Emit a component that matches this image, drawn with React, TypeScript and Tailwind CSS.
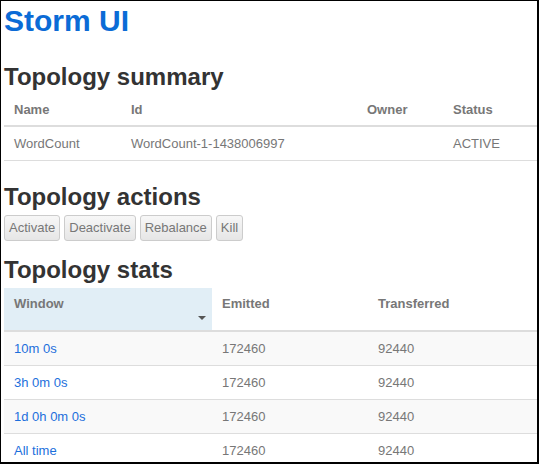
import React from 'react';

const summaryCols = ['w-[117px]', 'w-[236px]', 'w-[86px]', ''];

const stats = [
    { window: '10m 0s', emitted: '172460', transferred: '92440' },
    { window: '3h 0m 0s', emitted: '172460', transferred: '92440' },
    { window: '1d 0h 0m 0s', emitted: '172460', transferred: '92440' },
    { window: 'All time', emitted: '172460', transferred: '92440' },
];

const Heading = ({ children, className }: { children: React.ReactNode; className: string }) => (
    <h2 className={`text-[24px] leading-[26px] font-bold text-[#333] ${className}`}>{children}</h2>
);

const App = () => {
    return (
        <div className="w-[539px] h-[464px] overflow-hidden bg-white border-t border-l border-r-2 border-b-2 border-black pl-[3px] font-['Liberation_Sans',Arial,sans-serif]">
            <h1 className="mt-[3px] text-[30px] leading-[34px] font-bold text-[#0b6bd6]">Storm UI</h1>

            {/* Topology summary */}
            <Heading className="mt-[26px]">Topology summary</Heading>
            <table className="mt-[4px] w-[533px] text-[13px] text-[#777] border-collapse">
                <thead>
                    <tr className="border-b-2 border-[#ddd]">
                        {['Name', 'Id', 'Owner', 'Status'].map((h, i) => (
                            <th key={h} className={`${summaryCols[i]} text-left font-bold pl-[10px] pt-[6px] pb-[5px] leading-[20px]`}>{h}</th>
                        ))}
                    </tr>
                </thead>
                <tbody>
                    <tr className="border-b border-[#ddd]">
                        <td className="pl-[10px] py-[6px] leading-[21px]">WordCount</td>
                        <td className="pl-[10px] py-[6px] leading-[21px]">WordCount-1-1438006997</td>
                        <td className="pl-[10px] py-[6px] leading-[21px]"></td>
                        <td className="pl-[10px] py-[6px] leading-[21px]">ACTIVE</td>
                    </tr>
                </tbody>
            </table>

            {/* Topology actions */}
            <Heading className="mt-[23px]">Topology actions</Heading>
            <div className="mt-[5px] flex gap-[4px]">
                {['Activate', 'Deactivate', 'Rebalance', 'Kill'].map((b) => (
                    <button
                        key={b}
                        className="px-[4px] py-[3px] leading-[18px] text-[13px] text-[#777] border border-[#ccc] rounded-[3px] bg-gradient-to-b from-[#f7f7f7] to-[#e6e6e6]"
                    >
                        {b}
                    </button>
                ))}
            </div>

            {/* Topology stats */}
            <Heading className="mt-[16px]">Topology stats</Heading>
            <table className="mt-[5px] w-[533px] text-[13px] text-[#777] border-collapse">
                <thead>
                    <tr className="border-b-2 border-[#ddd]">
                        <th className="relative w-[208px] bg-[#e1eef6] text-left font-bold pl-[10px] pt-[6px] pb-[16px] leading-[20px] align-top">
                            Window
                            <span className="absolute right-[6px] bottom-[10px] w-0 h-0 border-l-[4px] border-r-[4px] border-t-[4px] border-l-transparent border-r-transparent border-t-[#555]" />
                        </th>
                        <th className="w-[156px] text-left font-bold pl-[10px] pt-[6px] pb-[16px] leading-[20px] align-top">Emitted</th>
                        <th className="text-left font-bold pl-[10px] pt-[6px] pb-[16px] leading-[20px] align-top">Transferred</th>
                    </tr>
                </thead>
                <tbody>
                    {stats.map((s, i) => (
                        <tr key={s.window} className={`border-b border-[#ddd] ${i % 2 === 0 ? 'bg-[#f9f9f9]' : 'bg-white'}`}>
                            <td className="pl-[10px] py-[6px] leading-[21px] text-[#1c6fdc]">{s.window}</td>
                            <td className="pl-[10px] py-[6px] leading-[21px]">{s.emitted}</td>
                            <td className="pl-[10px] py-[6px] leading-[21px]">{s.transferred}</td>
                        </tr>
                    ))}
                </tbody>
            </table>
        </div>
    );
};

export default App;
